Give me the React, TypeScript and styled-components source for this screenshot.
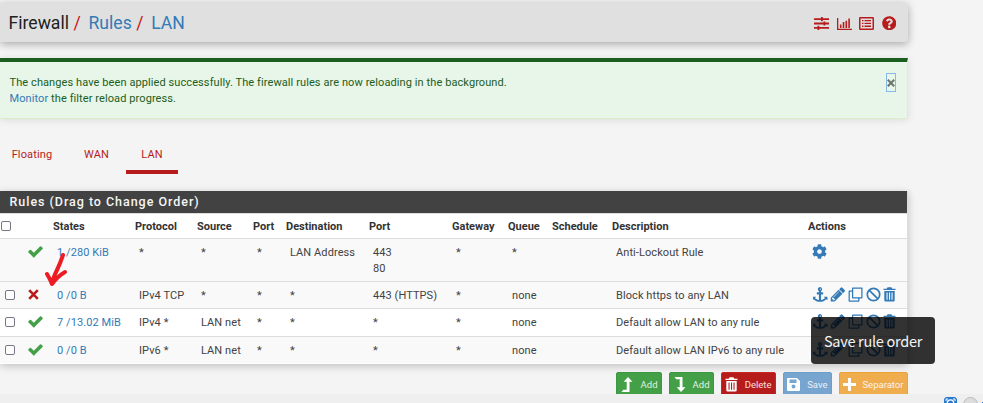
import React from 'react';
import styled, { createGlobalStyle } from 'styled-components';
import { FaCog, FaQuestionCircle } from 'react-icons/fa';

const Global = createGlobalStyle`
  * { box-sizing: border-box; }
  body { margin: 0; background: #f4f4f4; overflow: hidden; }
`;

const Page = styled.div`
  position: relative;
  width: 983px;
  height: 403px;
  overflow: hidden;
  font: 11px/16px Roboto, sans-serif;
  letter-spacing: 0.15px;
  color: #424242;
`;

const Content = styled.main`
  width: 908px;
`;

const Header = styled.header`
  display: flex;
  align-items: center;
  justify-content: space-between;
  height: 39px;
  margin-top: 3px;
  padding: 0 12px 0 8.5px;
  background: #e0e0e0;
  border-radius: 0 3px 3px 0;
  box-shadow: 0 2px 8px rgba(0, 0, 0, 0.32);
`;

const Crumbs = styled.h1`
  display: flex;
  margin: 0;
  font-size: 17.6px;
  line-height: 24px;
  font-weight: 400;
  letter-spacing: 0;
  color: #212121;
`;

const Slash = styled.span`
  width: 19.5px;
  padding-left: 4.5px;
  color: #c6171c;
`;

const Link = styled.a`
  color: #337ab7;
`;

const HeaderIcons = styled.div`
  display: flex;
  gap: 7.5px;
  padding-top: 1px;
  color: #b71c1c;
`;

const Glyph = styled.svg<{ $w?: number; $h?: number }>`
  display: block;
  flex: none;
  width: ${p => p.$w ?? 15}px;
  height: ${p => p.$h ?? 15}px;
  fill: currentColor;
`;

const Alert = styled.section`
  display: flex;
  justify-content: space-between;
  height: 61px;
  margin-top: 16px;
  padding: 13px 11px 0 9.5px;
  background: #e8f5e9;
  border: 1px solid #dcedc8;
  border-left: 0;
  border-top: 4px solid #1b5e20;
  color: #1b5e20;
  letter-spacing: 0.09px;
  box-shadow: 0 1px 8px rgba(0, 0, 0, 0.1);
`;

const Close = styled.button`
  display: grid;
  place-items: center;
  width: 10px;
  height: 19px;
  margin-top: -2px;
  padding: 0;
  border: 1px solid #8ab8e6;
  background: #e8f5e9;
  color: #6b756b;
`;

const Tabs = styled.nav`
  display: flex;
  height: 34px;
  margin-top: 21px;
`;

const Tab = styled.a<{ $w: number; $inset?: number; $active?: boolean }>`
  width: ${p => p.$w}px;
  padding: 7px 0 0 ${p => p.$inset ?? 0}px;
  text-align: center;
  color: #b71c1c;
  border-bottom: 4px solid ${p => (p.$active ? '#b71c1c' : 'transparent')};
`;

const Panel = styled.section`
  height: 173px;
  margin-top: 17px;
  background: #fff;
  border-right: 1px solid #ddd;
  box-shadow: 0 2px 8px rgba(0, 0, 0, 0.22);
`;

const PanelTitle = styled.h2`
  height: 22px;
  margin: 0;
  padding-left: 9.5px;
  background: #424242;
  color: #f5f5f5;
  font-size: 12.5px;
  line-height: 22px;
  font-weight: 500;
  letter-spacing: 0.96px;
`;

const Row = styled.div<{ $h: number; $striped?: boolean; $head?: boolean }>`
  display: grid;
  grid-template-columns: 25px 28px 82px 62px 56px 33px 83px 83px 56px 44px 60px 196px 99px;
  height: ${p => p.$h}px;
  padding-top: ${p => (p.$head ? 5 : 6)}px;
  border-top: 1px solid #ddd;
  background: ${p => (p.$striped ? '#f9f9f9' : '#fff')};
  color: ${p => (p.$head ? '#333' : '#424242')};
  font-weight: ${p => (p.$head ? 700 : 400)};
  letter-spacing: ${p => (p.$head ? 0 : 0.08)}px;
  white-space: nowrap;
`;

const Cell = styled.div<{ $inset?: number }>`
  padding-left: ${p => p.$inset ?? 4}px;
`;

const TextCell = styled(Cell)`
  white-space: pre;
`;

const Check = styled.input.attrs({ type: 'checkbox' })<{ $x: number }>`
  display: block;
  appearance: none;
  width: 10px;
  height: 10px;
  margin: 2px 0 0 ${p => p.$x}px;
  border: 1px solid #767684;
  border-radius: 2px;
  background: #fff;
`;

const Status = styled.div<{ $color: string }>`
  margin-top: -1px;
  padding: 0 0 0 3px;
  color: ${p => p.$color};
`;

const Actions = styled.div`
  display: flex;
  gap: 2.4px;
  margin-top: -1px;
  padding-left: 4.5px;
  color: #337ab7;
`;

const SystemActions = styled(Actions)`
  padding-left: 4px;
`;

const Buttons = styled.div`
  display: flex;
  justify-content: flex-end;
  gap: 7px;
  height: 22px;
  margin-top: 8px;
  overflow: hidden;
`;

const Button = styled.button<{ $w: number; $bg: string; $edge: string }>`
  display: flex;
  align-items: center;
  justify-content: space-between;
  width: ${p => p.$w}px;
  height: 25px;
  padding: 0 3.5px 0 3px;
  border: 1px solid ${p => p.$edge};
  border-radius: 2px;
  background: ${p => p.$bg};
  color: #fff;
  font: 9.5px/16px Roboto, sans-serif;
`;

const ButtonText = styled.span`
  opacity: 0.85;
`;

const Footer = styled.footer`
  display: flex;
  align-items: flex-start;
  height: 9px;
  padding: 3px 0 0 943px;
  background: #efefef;
  overflow: hidden;
`;

const Tooltip = styled.div`
  position: absolute;
  left: 811px;
  top: 317px;
  width: 124px;
  height: 47px;
  border-radius: 4px;
  background: rgba(0, 0, 0, 0.8);
  color: #f4f4f4;
  font: 14.5px/47px 'Noto Sans CJK SC', 'Noto Sans', sans-serif;
  letter-spacing: -0.28px;
  text-align: center;
  white-space: nowrap;
`;

const Arrow = styled.svg`
  position: absolute;
  left: 42px;
  top: 250px;
  width: 30px;
  height: 40px;
`;

const paths = {
  check: 'M1671 566q0 40-28 68l-724 724-136 136q-28 28-68 28t-68-28l-136-136-362-362q-28-28-28-68t28-68l136-136q28-28 68-28t68 28l294 295 656-657q28-28 68-28t68 28l136 136q28 28 28 68z',
  anchor: 'M960 256q0-26-19-45t-45-19-45 19-19 45 19 45 45 19 45-19 19-45zm768 928v352q0 22-20 30-8 2-12 2-12 0-23-9l-93-93q-119 143-318.5 226.5t-429.5 83.5-429.5-83.5-318.5-226.5l-93 93q-9 9-23 9-4 0-12-2-20-8-20-30v-352q0-14 9-23t23-9h352q22 0 30 20 8 19-7 35l-100 100q67 91 189.5 153.5t271.5 82.5v-647h-192q-26 0-45-19t-19-45v-128q0-26 19-45t45-19h192v-163q-58-34-93-92.5t-35-128.5q0-106 75-181t181-75 181 75 75 181q0 70-35 128.5t-93 92.5v163h192q26 0 45 19t19 45v128q0 26-19 45t-45 19h-192v647q149-20 271.5-82.5t189.5-153.5l-100-100q-15-16-7-35 8-20 30-20h352q14 0 23 9t9 23z',
  pencil: 'M491 1536l91-91-235-235-91 91v107h128v128h107zm523-928q0-22-22-22-10 0-17 7l-542 542q-7 7-7 17 0 22 22 22 10 0 17-7l542-542q7-7 7-17zm-54-192l416 416-832 832h-416v-416zm683 96q0 53-37 90l-166 166-416-416 166-165q36-38 90-38 53 0 91 38l235 234q37 39 37 91z',
};

type IconProps = { name: keyof typeof paths; box?: string; w?: number; h?: number };
const Icon = ({ name, box = '0 0 1792 1792', w, h }: IconProps) => (
  <Glyph viewBox={box} $w={w} $h={h}><path d={paths[name]} /></Glyph>
);

const Clone = () => (
  <Glyph viewBox="0 0 15 15">
    <g fill="none" stroke="currentColor" strokeWidth="1.250" strokeLinejoin="round">
      <path d="M4.600 1h9.300v9.800H4.600z" />
      <path d="M4.600 4H1.200v10h9.600v-3.200" />
    </g>
  </Glyph>
);

const Ban = () => (
  <Glyph viewBox="0 0 15 15">
    <g fill="none" stroke="currentColor" strokeWidth="1.700">
      <circle cx="7.500" cy="7.500" r="6.200" />
      <path d="M3.100 3.100l8.800 8.800" />
    </g>
  </Glyph>
);

const Trash = () => (
  <Glyph viewBox="0 0 13 15" $w={13} $h={15}>
    <path fillRule="evenodd" d="M4 1Q4.200 .3 5 .3h3Q8.800 .3 9 1l.2 .8H12.500v1.300H.5V1.800H3.800zM1.300 4h10.400v9.200q0 1.300-1.200 1.300h-8q-1.200 0-1.200-1.300zM3.500 5.400v7.400h1.100V5.400zM6 5.400v7.400h1.100V5.400zM8.500 5.400v7.400h1.100V5.400z" />
  </Glyph>
);

const Tick = () => <Icon name="check" box="100 260 1592 1270" w={15} h={15} />;

const Cross = () => (
  <Glyph viewBox="0 0 11 15" $w={11}>
    <path fill="none" stroke="currentColor" strokeWidth="2.600" d="M1.200 3.200l8.600 8.600M9.800 3.200l-8.600 8.600" />
  </Glyph>
);

const RowActions = () => (
  <Actions>
    <Icon name="anchor" />
    <Icon name="pencil" box="100 110 1600 1600" w={16} />
    <Clone />
    <Ban />
    <Trash />
  </Actions>
);

const headings = ['States', 'Protocol', 'Source', 'Port', 'Destination', 'Port', 'Gateway', 'Queue', 'Schedule', 'Description', 'Actions'];

const rules = [
  { h: 43, striped: true, pass: true, states: '1 /280 KiB', cells: ['*', '*', '*', 'LAN Address', '443\n80', '*', '*', '', 'Anti-Lockout Rule'], system: true },
  { h: 27, striped: true, pass: false, states: '0 /0 B', cells: ['IPv4 TCP', '*', '*', '*', '443 (HTTPS)', '*', 'none', '', 'Block https to any LAN'] },
  { h: 28, striped: false, pass: true, states: '7 /13.02 MiB', cells: ['IPv4 *', 'LAN net', '*', '*', '*', '*', 'none', '', 'Default allow LAN to any rule'] },
  { h: 27, striped: true, pass: true, states: '0 /0 B', cells: ['IPv6 *', 'LAN net', '*', '*', '*', '*', 'none', '', 'Default allow LAN IPv6 to any rule'] },
];

export default function App() {
  return (
    <Page>
      <Global />
      <Content>
        <Header>
          <Crumbs>
            Firewall<Slash>/</Slash><Link>Rules</Link><Slash>/</Slash><Link>LAN</Link>
          </Crumbs>
          <HeaderIcons>
            <Glyph viewBox="0 0 15 15"><path d="M0 2.200h7V1h1.800v1.200H15v1.800H8.800v1.200H7V4H0zM0 6.600h9.500V5.400h1.800v1.200H15v1.800h-3.700v1.200H9.500V8.400H0zM0 11h3.500V9.800h1.800V11H15v1.800H5.300V14H3.500v-1.200H0z" /></Glyph>
            <Glyph viewBox="0 0 15 15"><path d="M0 2h1.300v10.700H15V14H0zM2.900 8.500h1.600V12H2.900zM5.700 6h1.600v6H5.700zM8.500 4.800h1.600V12H8.500zM11.300 2.500h1.600V12h-1.600z" /></Glyph>
            <Glyph viewBox="0 0 15 15"><path fillRule="evenodd" d="M1.300 1h12.400Q15 1 15 2.300v10.400Q15 14 13.700 14H1.300Q0 14 0 12.700V2.300Q0 1 1.300 1zm.2 1.500v10h12v-10zM3 4h1.500v1.300H3zm2.500 0H12v1.300H5.500zM3 6.800h1.500v1.300H3zm2.500 0H12v1.300H5.500zM3 9.600h1.500v1.300H3zm2.500 0H12v1.300H5.500z" /></Glyph>
            <FaQuestionCircle size={14.5} />
          </HeaderIcons>
        </Header>
        <Alert>
          <div>
            The changes have been applied successfully. The firewall rules are now reloading in the background.<br />
            <Link>Monitor</Link> the filter reload progress.
          </div>
          <Close aria-label="Close">
            <Glyph viewBox="0 0 8 8" $w={8} $h={8}><path fill="none" stroke="currentColor" strokeWidth="2" d="M.8 .8l6.400 6.400M7.200 .8L.8 7.200" /></Glyph>
          </Close>
        </Alert>
        <Tabs>
          <Tab $w={64}>Floating</Tab>
          <Tab $w={62} $inset={3}>WAN</Tab>
          <Tab $w={52} $active>LAN</Tab>
        </Tabs>
        <Panel>
          <PanelTitle>Rules (Drag to Change Order)</PanelTitle>
          <Row $h={25} $head>
            <Check $x={1} /><Cell />
            {headings.map((t, i) => <Cell key={i} $inset={0}>{t}</Cell>)}
          </Row>
          {rules.map((r, i) => (
            <Row key={i} $h={r.h} $striped={r.striped}>
              {r.system ? <span /> : <Check $x={5} />}
              <Status $color={r.pass ? '#43a047' : '#b71c1c'}>{r.pass ? <Tick /> : <Cross />}</Status>
              <Cell><Link>{r.states}</Link></Cell>
              {r.cells.map((c, j) => <TextCell key={j}>{c}</TextCell>)}
              {r.system ? <SystemActions><FaCog size={15} /></SystemActions> : <RowActions />}
            </Row>
          ))}
        </Panel>
        <Buttons>
          <Button $w={46} $bg="#43a047" $edge="#3d9641">
            <Glyph viewBox="0 0 13 15" $w={13}><path d="M8 0L12.500 4.800H9.500V15H1.500l1.800-2.200h3.400v-8H3.700z" /></Glyph>
            <ButtonText>Add</ButtonText>
          </Button>
          <Button $w={45} $bg="#43a047" $edge="#3d9641">
            <Glyph viewBox="0 0 13 15" $w={13}><path d="M8 15L12.500 10.200H9.500V0H1.500l1.800 2.200h3.400v8H3.700z" /></Glyph>
            <ButtonText>Add</ButtonText>
          </Button>
          <Button $w={55} $bg="#b71c1c" $edge="#c62828"><Trash /><ButtonText>Delete</ButtonText></Button>
          <Button $w={49} $bg="#78a5cf" $edge="#6d9dc9">
            <Glyph viewBox="0 0 13 13" $w={13} $h={13}><path fillRule="evenodd" d="M1 0h9l3 3v9q0 1-1 1H1q-1 0-1-1V1q0-1 1-1zm1.500 1.500v3.500h7V1.500zM6.500 6.500a2 2 0 1 0 0 4a2 2 0 1 0 0-4z" /></Glyph>
            <ButtonText>Save</ButtonText>
          </Button>
          <Button $w={69} $bg="#f0ad4e" $edge="#eea236">
            <Glyph viewBox="0 0 13 13" $w={13} $h={13}><path d="M5 0h3v5h5v3H8v5H5V8H0V5h5z" /></Glyph>
            <ButtonText>Separator</ButtonText>
          </Button>
        </Buttons>
      </Content>
      <Footer>
        <Glyph viewBox="0 0 40 6" $w={40} $h={6}>
          <path fill="#2878d0" d="M3 0h9l2 2v4H1V2z" />
          <circle cx="7.500" cy="6" r="3.200" fill="none" stroke="#fff" strokeWidth="1.300" />
          <path fill="none" stroke="#fff" strokeWidth="1" d="M3 4V2h2M10 2h2v2" />
          <circle cx="27.500" cy="7.500" r="7" fill="#ddd" stroke="#bbb" />
          <path fill="#2878d0" d="M39 5h1v1h-1z" />
        </Glyph>
      </Footer>
      <Arrow viewBox="0 0 30 40"><path fill="none" stroke="#ed1c24" strokeWidth="4" strokeLinecap="round" strokeLinejoin="round" d="M21 5Q18 14 15 20Q11 28 10 34M5 24Q8 29 10 34Q16 26 23 22" /></Arrow>
      <Tooltip>Save rule order</Tooltip>
    </Page>
  );
}
